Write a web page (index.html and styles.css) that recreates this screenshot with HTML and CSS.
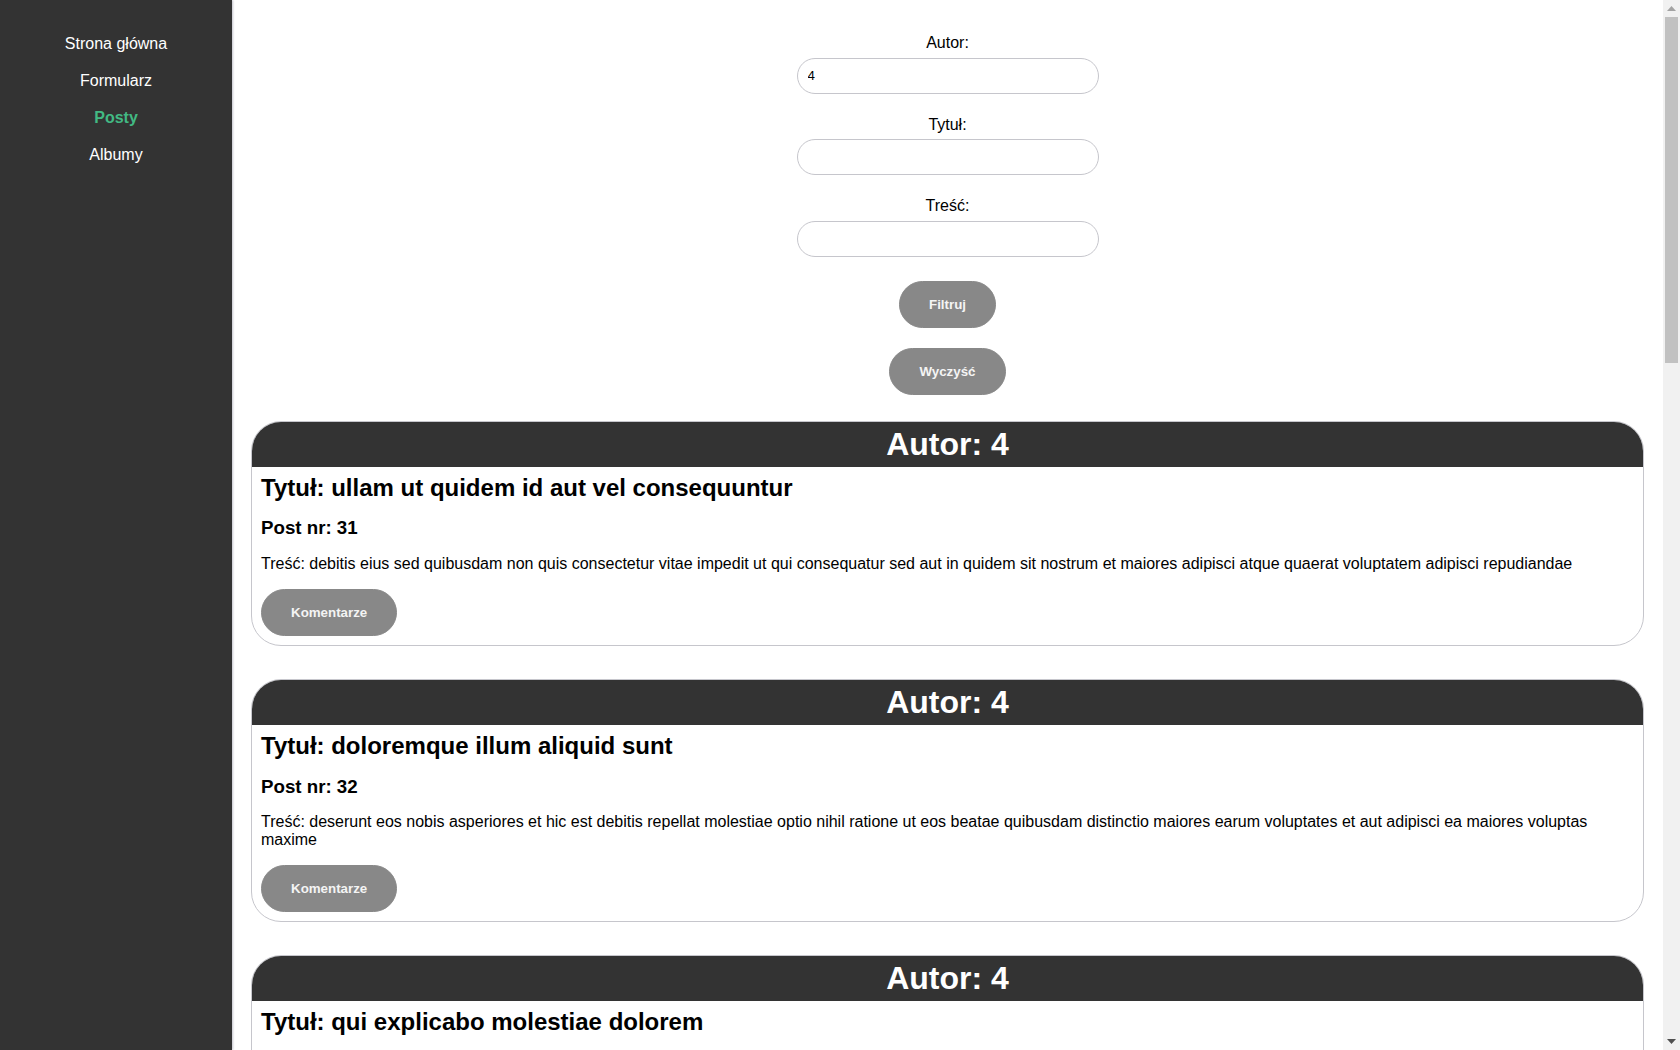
FILE: index.html
```html
<!DOCTYPE html>
<html lang="pl">
<head>
<meta charset="utf-8">
<title>Posty</title>
<link rel="stylesheet" href="styles.css">
</head>
<body>
<div class="app">
  <nav class="sidebar">
    <a class="nav-link" href="#">Strona główna</a>
    <a class="nav-link" href="#">Formularz</a>
    <a class="nav-link active" href="#">Posty</a>
    <a class="nav-link" href="#">Albumy</a>
  </nav>
  <main class="main">
    <form class="filter">
      <div class="field">
        <label class="field-label" for="autor">Autor:</label>
        <input class="field-input" id="autor" type="text" value="4">
      </div>
      <div class="field">
        <label class="field-label" for="tytul">Tytuł:</label>
        <input class="field-input" id="tytul" type="text">
      </div>
      <div class="field">
        <label class="field-label" for="tresc">Treść:</label>
        <input class="field-input" id="tresc" type="text">
      </div>
      <button class="btn btn-filter" type="button">Filtruj</button>
      <button class="btn btn-clear" type="button">Wyczyść</button>
    </form>

    <section class="posts">
      <article class="card">
        <h1 class="card-head">Autor: 4</h1>
        <div class="card-body">
          <h2 class="card-title">Tytuł: ullam ut quidem id aut vel consequuntur</h2>
          <h3 class="card-num">Post nr: 31</h3>
          <p class="card-text">Treść: debitis eius sed quibusdam non quis consectetur vitae impedit ut qui consequatur sed aut in quidem sit nostrum et maiores adipisci atque quaerat voluptatem adipisci repudiandae</p>
          <button class="btn" type="button">Komentarze</button>
        </div>
      </article>
      <article class="card">
        <h1 class="card-head">Autor: 4</h1>
        <div class="card-body">
          <h2 class="card-title">Tytuł: doloremque illum aliquid sunt</h2>
          <h3 class="card-num">Post nr: 32</h3>
          <p class="card-text">Treść: deserunt eos nobis asperiores et hic est debitis repellat molestiae optio nihil ratione ut eos beatae quibusdam distinctio maiores earum voluptates et aut adipisci ea maiores voluptas maxime</p>
          <button class="btn" type="button">Komentarze</button>
        </div>
      </article>
      <article class="card">
        <h1 class="card-head">Autor: 4</h1>
        <div class="card-body">
          <h2 class="card-title">Tytuł: qui explicabo molestiae dolorem</h2>
          <h3 class="card-num">Post nr: 33</h3>
          <p class="card-text">Treść: rerum ut et numquam laborum odit est sit id qui sint in quasi tenetur tempore aperiam et quaerat qui in rerum officiis sequi cumque quod</p>
          <button class="btn" type="button">Komentarze</button>
        </div>
      </article>
    </section>
  </main>
  <div class="scrollbar" aria-hidden="true">
    <div class="sb-arrow">
      <svg width="9" height="5" viewBox="0 0 9 5"><path d="M4.5 0 L9 5 L0 5 Z" fill="#a3a3a3"/></svg>
    </div>
    <div class="sb-track">
      <div class="sb-thumb"></div>
    </div>
    <div class="sb-arrow">
      <svg width="9" height="5" viewBox="0 0 9 5"><path d="M0 0 L9 0 L4.5 5 Z" fill="#505050"/></svg>
    </div>
  </div>
</div>
</body>
</html>
```

FILE: styles.css
```css
html, body {
  margin: 0;
  padding: 0;
}

body {
  font-family: "Liberation Sans", Arial, sans-serif;
  color: #000;
  background: #fff;
}

.app {
  display: flex;
  height: 100vh;
  overflow: hidden;
}

.sidebar {
  flex: 0 0 232px;
  background: #333333;
  box-shadow: 1px 0 2px #c4c4cc;
  display: flex;
  flex-direction: column;
  align-items: center;
  padding-top: 35px;
  gap: 18.5px;
  position: relative;
  z-index: 1;
}

.nav-link {
  color: #ffffff;
  text-decoration: none;
  font-size: 16px;
  line-height: 18.5px;
}

.nav-link.active {
  color: #42b983;
  font-weight: bold;
}

.main {
  flex: 1;
  min-width: 0;
  overflow: hidden;
  padding: 34px 19px 20px 19px;
}

.filter {
  display: flex;
  flex-direction: column;
  align-items: center;
}

.field {
  display: flex;
  flex-direction: column;
  align-items: center;
  margin-bottom: 22px;
}

.field:last-of-type {
  margin-bottom: 24px;
}

.field-label {
  font-size: 16px;
  line-height: 18.5px;
  margin-bottom: 5px;
}

.field-input {
  box-sizing: border-box;
  width: 302px;
  height: 36px;
  border: 1px solid #c6c6cc;
  border-radius: 18px;
  padding: 0 10px;
  font-family: "Liberation Sans", Arial, sans-serif;
  font-size: 13.33px;
  color: #000;
  background: #fff;
  outline: none;
}

.btn {
  font-family: "Liberation Sans", Arial, sans-serif;
  font-size: 13.33px;
  font-weight: bold;
  color: #f4f4f4;
  background: #888888;
  border: 1px solid #888888;
  border-radius: 24px;
  padding: 15px 29px;
  line-height: 15px;
  cursor: pointer;
}

.btn-filter {
  margin-bottom: 20px;
}

.posts {
  margin-top: 26px;
  display: flex;
  flex-direction: column;
  gap: 33px;
}

.card {
  border: 1px solid #c6c6cc;
  border-radius: 30px;
  overflow: hidden;
  background: #fff;
}

.card-head {
  margin: 0;
  background: #333333;
  color: #ffffff;
  text-align: center;
  font-size: 32px;
  line-height: 37px;
  padding: 4px 0;
}

.card-body {
  padding: 0 9px 9px 9px;
}

.card-title {
  margin: 7px 0 16px;
  font-size: 24px;
  line-height: 27.5px;
}

.card-num {
  margin: 0 0 16px;
  font-size: 18.72px;
  line-height: 21.5px;
}

.card-text {
  margin: 0 0 17px;
  font-size: 16px;
  line-height: 17.5px;
}

.scrollbar {
  flex: 0 0 17px;
  background: #f1f1f1;
  display: flex;
  flex-direction: column;
}

.sb-arrow {
  height: 17px;
  display: flex;
  align-items: center;
  justify-content: center;
}

.sb-track {
  flex: 1;
}

.sb-thumb {
  height: 346px;
  margin: 0 2px;
  background: #c1c1c1;
}
```
